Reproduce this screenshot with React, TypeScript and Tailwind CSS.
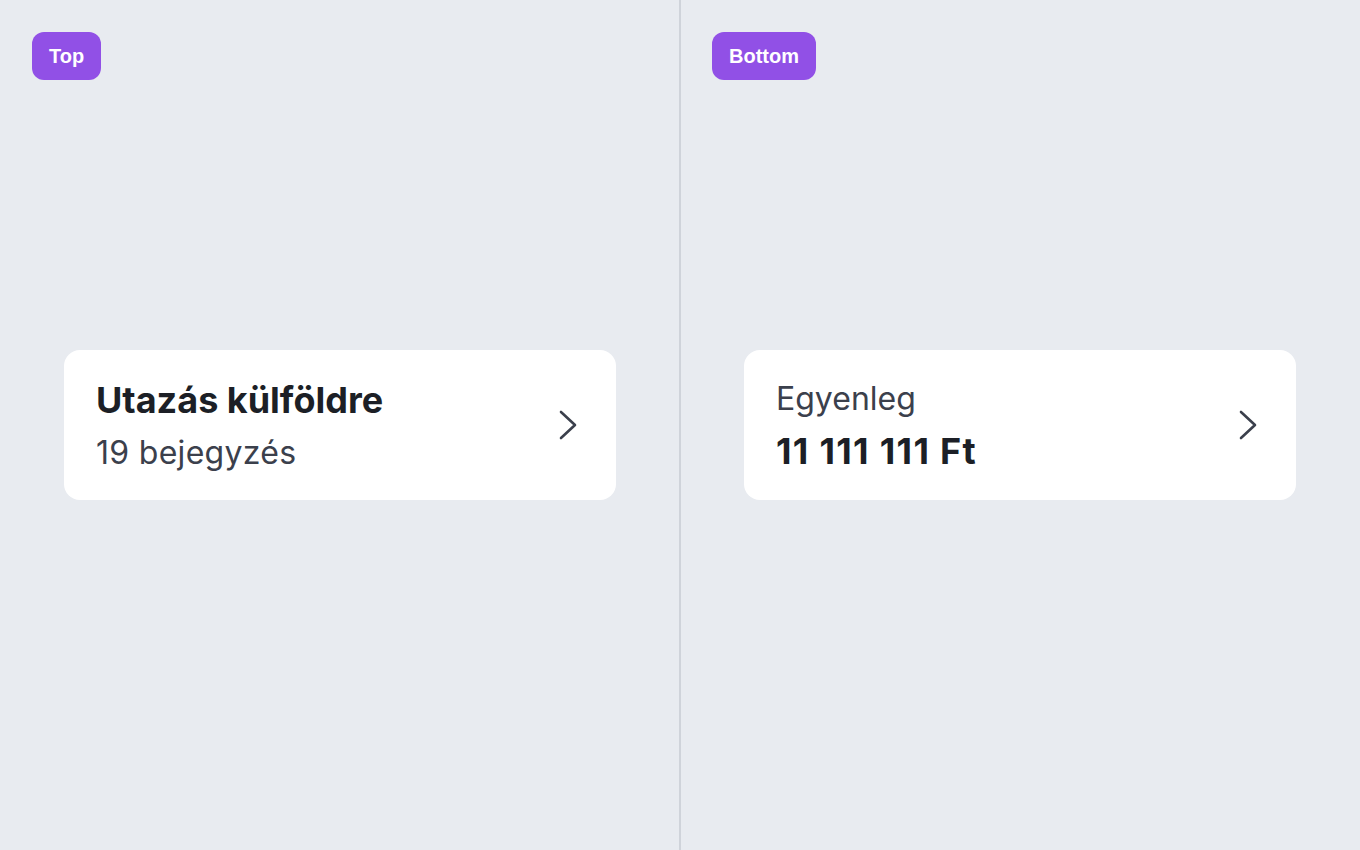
import React from "react";

function Chevron() {
  return (
    <svg width="20" height="32" viewBox="0 0 20 32" fill="none" className="shrink-0">
      <polyline points="3,3 17,16 3,29" stroke="#3b404c" strokeWidth="2.6" strokeLinecap="round" strokeLinejoin="round" />
    </svg>
  );
}

export default function App() {
  return (
    <div className="flex w-[1360px] h-[850px] bg-[#e8ebf0]" style={{ fontFamily: "Inter, 'Noto Sans', sans-serif" }}>
      <div className="relative w-[679px] h-full flex items-center pl-[64px]">
        <div className="absolute left-[32px] top-[32px] h-[48px] px-[17px] rounded-[12px] bg-[#9150e6] text-white font-bold text-[20px] flex items-center" style={{ fontFamily: "'Liberation Sans', Arial, sans-serif" }}>
          Top
        </div>
        <div className="w-[552px] h-[150px] bg-white rounded-[16px] pl-[32px] pr-[38px] flex items-center">
          <div className="flex-1 flex flex-col pt-[1px]">
            <div className="text-[36px] leading-[44px] font-bold text-[#1c1f26]">Utazás külföldre</div>
            <div className="mt-[11px] text-[32px] leading-[40px] tracking-[0.3px] text-[#3b404c]">19 bejegyzés</div>
          </div>
          <Chevron />
        </div>
      </div>
      <div className="w-[2px] h-full bg-[#cfd3da]" />
      <div className="relative flex-1 h-full flex items-center pl-[63px]">
        <div className="absolute left-[31px] top-[32px] h-[48px] px-[17px] rounded-[12px] bg-[#9150e6] text-white font-bold text-[20px] flex items-center" style={{ fontFamily: "'Liberation Sans', Arial, sans-serif" }}>
          Bottom
        </div>
        <div className="w-[552px] h-[150px] bg-white rounded-[16px] pl-[32px] pr-[38px] flex items-center">
          <div className="flex-1 flex flex-col pt-[2px]">
            <div className="text-[32px] leading-[40px] text-[#3b404c]">Egyenleg</div>
            <div className="mt-[10px] text-[36px] leading-[44px] font-bold tracking-[1.3px] text-[#1c1f26]">11 111 111 Ft</div>
          </div>
          <Chevron />
        </div>
      </div>
    </div>
  );
}
